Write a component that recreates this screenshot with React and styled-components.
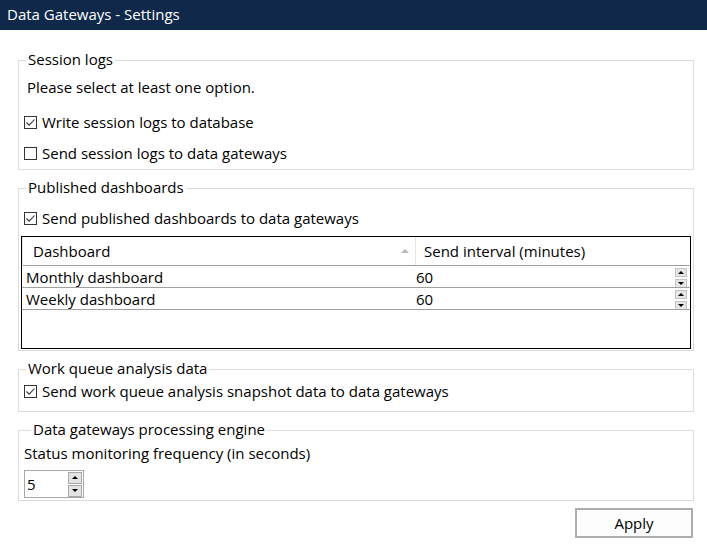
import React from 'react';
import styled, { createGlobalStyle } from 'styled-components';

const GlobalStyle = createGlobalStyle`
  html, body {
    margin: 0;
    padding: 0;
    background: #ffffff;
  }
  body {
    font-family: "Open Sans", "Noto Sans", sans-serif;
    font-size: 15px;
    color: #000;
  }
`;

const Window = styled.div`
  width: 707px;
  height: 548px;
  background: #ffffff;
  overflow: hidden;
`;

const TitleBar = styled.div`
  height: 30px;
  line-height: 29px;
  padding-left: 7px;
  background: #10294a;
  color: #ffffff;
  font-size: 15px;
`;

const Content = styled.div`
  padding: 20px 13px 0 18px;
  display: flex;
  flex-direction: column;
`;

const Group = styled.fieldset`
  margin: ${p => p.$mt || 0}px 0 0 0;
  padding: 0 2px ${p => p.$pb || 0}px 2px;
  border: 1px solid #dcdcdc;
  min-width: 0;
  display: flex;
  flex-direction: column;
`;

const Legend = styled.legend`
  margin-left: ${p => p.$indent || 5}px;
  padding: 0 2px;
  line-height: 19px;
  height: 20px;
`;

const Line = styled.div`
  height: 20px;
  line-height: 19px;
  margin-top: ${p => p.$mt || 0}px;
  padding-left: ${p => p.$pl || 0}px;
  white-space: nowrap;
`;

const CheckRow = styled.label`
  display: flex;
  align-items: center;
  gap: 5px;
  height: 20px;
  line-height: 19px;
  margin-top: ${p => p.$mt || 0}px;
  padding-left: 3px;
  white-space: nowrap;
`;

const Box = styled.span`
  width: 11px;
  height: 11px;
  border: 1px solid #333333;
  background: #ffffff;
  display: inline-flex;
  align-items: center;
  justify-content: center;
  flex: none;
`;

const Table = styled.div`
  margin-top: 8px;
  height: 111px;
  border: 1px solid #000000;
  display: flex;
  flex-direction: column;
`;

const HeaderRow = styled.div`
  display: grid;
  grid-template-columns: 393px 1fr;
  height: 28px;
  border-bottom: 1px solid #a0a0a0;
  border-left: 1px solid #e8e8e8;
`;

const HeaderCell = styled.div`
  display: flex;
  align-items: center;
  padding-left: ${p => p.$pl}px;
  border-right: ${p => (p.$divider ? '1px solid #e5e5e5' : 'none')};
  position: relative;
`;

const SortArrow = styled.span`
  position: absolute;
  right: 6px;
  top: 12px;
  width: 0;
  height: 0;
  border-left: 4px solid transparent;
  border-right: 4px solid transparent;
  border-bottom: 4px solid #b8b8b8;
`;

const DataRow = styled.div`
  display: grid;
  grid-template-columns: 393px 1fr;
  height: 21px;
  border-bottom: 1px solid #a0a0a0;
`;

const Cell = styled.div`
  display: flex;
  align-items: flex-end;
  padding-left: ${p => p.$pl}px;
  line-height: 20px;
  overflow: hidden;
  position: relative;
`;

const CellSpin = styled.div`
  position: absolute;
  right: 3px;
  top: 2px;
  display: flex;
  flex-direction: column;
  gap: 2px;
`;

const SpinButton = styled.span`
  width: 12px;
  height: ${p => p.$h || 9}px;
  background: #e6e6e6;
  border: 1px solid #c4c4c4;
  display: flex;
  align-items: center;
  justify-content: center;
  box-sizing: border-box;
`;

const Tri = styled.span`
  width: 0;
  height: 0;
  border-left: 3px solid transparent;
  border-right: 3px solid transparent;
  ${p => (p.$down ? 'border-top: 3px solid #000;' : 'border-bottom: 3px solid #000;')}
`;

const NumberBox = styled.div`
  margin: 6px 0 0 3px;
  width: 56px;
  height: 26px;
  border: 1px solid #a8a8a8;
  display: flex;
  align-items: center;
  justify-content: space-between;
  padding-left: 2px;
  box-sizing: content-box;
`;

const NumberSpin = styled.div`
  display: flex;
  flex-direction: column;
  gap: 1px;
  margin-right: 1px;
`;

const BigSpin = styled.span`
  width: 14px;
  height: 12px;
  background: #e4e4e4;
  border: 1px solid #a8a8a8;
  box-sizing: border-box;
  display: flex;
  align-items: center;
  justify-content: center;
`;

const Footer = styled.div`
  display: flex;
  justify-content: flex-end;
  margin-top: 7px;
  padding-right: 1px;
`;

const ApplyButton = styled.button`
  width: 118px;
  height: 30px;
  background: #fdfdfd;
  border: 2px solid #adadad;
  font-family: inherit;
  font-size: 15px;
  color: #000;
  padding: 0;
`;

function Check({ checked }) {
  return (
    <Box>
      {checked && (
        <svg width="11" height="11" viewBox="0 0 11 11">
          <path d="M1.5 5.5 L4.2 8.2 L9.5 2.5" fill="none" stroke="#333" strokeWidth="1.1" />
        </svg>
      )}
    </Box>
  );
}

function CheckOption({ checked, label, mt }) {
  return (
    <CheckRow $mt={mt}>
      <Check checked={checked} />
      <span>{label}</span>
    </CheckRow>
  );
}

const dashboards = [
  { name: 'Monthly dashboard', interval: 60 },
  { name: 'Weekly dashboard', interval: 60 },
];

export default function App() {
  return (
    <Window>
      <GlobalStyle />
      <TitleBar>Data Gateways - Settings</TitleBar>
      <Content>
        <Group $pb={6}>
          <Legend>Session logs</Legend>
          <Line $mt={8} $pl={6}>Please select at least one option.</Line>
          <CheckOption mt={14} checked label="Write session logs to database" />
          <CheckOption mt={11} label="Send session logs to data gateways" />
        </Group>

        <Group $mt={8} $pb={1}>
          <Legend>Published dashboards</Legend>
          <CheckOption mt={10} checked label="Send published dashboards to data gateways" />
          <Table>
            <HeaderRow>
              <HeaderCell $pl={10} $divider>
                Dashboard
                <SortArrow />
              </HeaderCell>
              <HeaderCell $pl={8}>Send interval (minutes)</HeaderCell>
            </HeaderRow>
            {dashboards.map(d => (
              <DataRow key={d.name}>
                <Cell $pl={4}>{d.name}</Cell>
                <Cell $pl={1}>
                  {d.interval}
                  <CellSpin>
                    <SpinButton $h={9}><Tri /></SpinButton>
                    <SpinButton $h={9}><Tri $down /></SpinButton>
                  </CellSpin>
                </Cell>
              </DataRow>
            ))}
          </Table>
        </Group>

        <Group $mt={8} $pb={10}>
          <Legend>Work queue analysis data</Legend>
          <CheckOption mt={2} checked label="Send work queue analysis snapshot data to data gateways" />
        </Group>

        <Group $mt={8} $pb={2}>
          <Legend $indent={10}>Data gateways processing engine</Legend>
          <Line $mt={4} $pl={3}>Status monitoring frequency (in seconds)</Line>
          <NumberBox>
            <span>5</span>
            <NumberSpin>
              <BigSpin><Tri /></BigSpin>
              <BigSpin><Tri $down /></BigSpin>
            </NumberSpin>
          </NumberBox>
        </Group>

        <Footer>
          <ApplyButton>Apply</ApplyButton>
        </Footer>
      </Content>
    </Window>
  );
}
